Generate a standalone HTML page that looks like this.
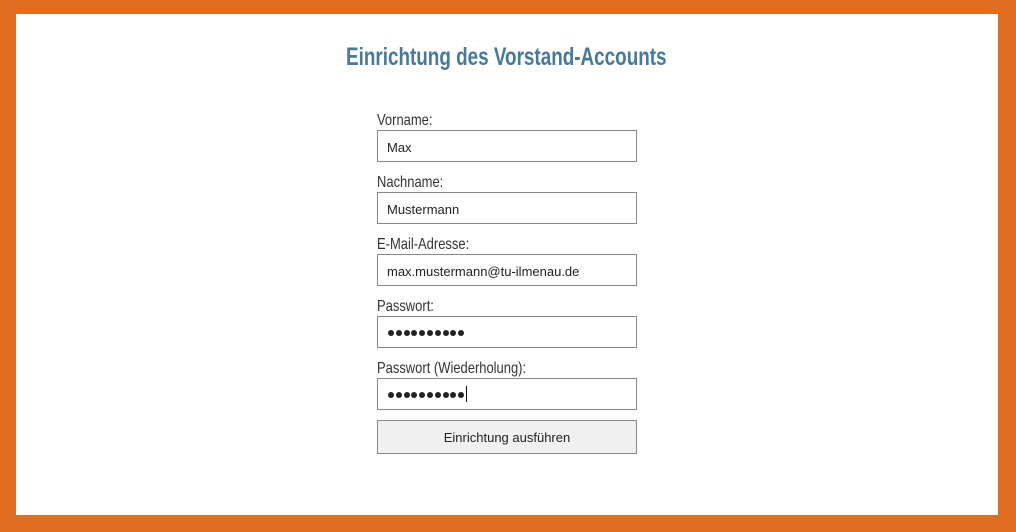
<!DOCTYPE html>
<html><head><meta charset="utf-8"><style>
body{margin:0;width:1016px;height:532px;background:#e06d20;position:relative;overflow:hidden;font-family:"Liberation Sans",sans-serif}
.panel{position:absolute;left:16px;top:14px;width:982px;height:501px;background:#fff}
h1{position:absolute;margin:0;left:346px;top:43px;font-size:25px;font-weight:bold;color:#457a9a;white-space:nowrap;transform:scaleX(0.755);transform-origin:0 0}
.lab{position:absolute;left:377px;font-size:16px;color:#333;white-space:nowrap;transform:scaleX(0.81);transform-origin:0 0}
.in{position:absolute;left:377px;width:258px;height:30px;border:1px solid #888;background:#fff;font-size:13px;color:#222;line-height:31px;box-sizing:content-box}
.in span.v{position:absolute;left:9px;top:1px}
.d{display:inline-block;width:6px;height:6px;border-radius:50%;background:#222;margin-right:1.8px;vertical-align:middle}
.dots{position:absolute;left:10px;top:13px;line-height:6px;font-size:0}
.btn{position:absolute;left:377px;top:420px;width:258px;height:32px;border:1px solid #888;background:#f0f0f0;font-size:13px;color:#222;text-align:center;line-height:34px}
</style></head><body>
<div class="panel"></div>
<h1>Einrichtung des Vorstand-Accounts</h1>
<div class="lab" style="top:112px">Vorname:</div>
<div class="in" style="top:130px"><span class="v">Max</span></div>
<div class="lab" style="top:174px">Nachname:</div>
<div class="in" style="top:192px"><span class="v">Mustermann</span></div>
<div class="lab" style="top:236px">E-Mail-Adresse:</div>
<div class="in" style="top:254px"><span class="v">max.mustermann@tu-ilmenau.de</span></div>
<div class="lab" style="top:298px">Passwort:</div>
<div class="in" style="top:316px"><div class="dots"><i class="d"></i><i class="d"></i><i class="d"></i><i class="d"></i><i class="d"></i><i class="d"></i><i class="d"></i><i class="d"></i><i class="d"></i><i class="d"></i></div></div>
<div class="lab" style="top:360px">Passwort (Wiederholung):</div>
<div class="in" style="top:378px"><div class="dots"><i class="d"></i><i class="d"></i><i class="d"></i><i class="d"></i><i class="d"></i><i class="d"></i><i class="d"></i><i class="d"></i><i class="d"></i><i class="d"></i></div><div style="position:absolute;left:88px;top:7px;width:1px;height:16px;background:#111"></div></div>
<div class="btn">Einrichtung ausführen</div>
</body></html>
